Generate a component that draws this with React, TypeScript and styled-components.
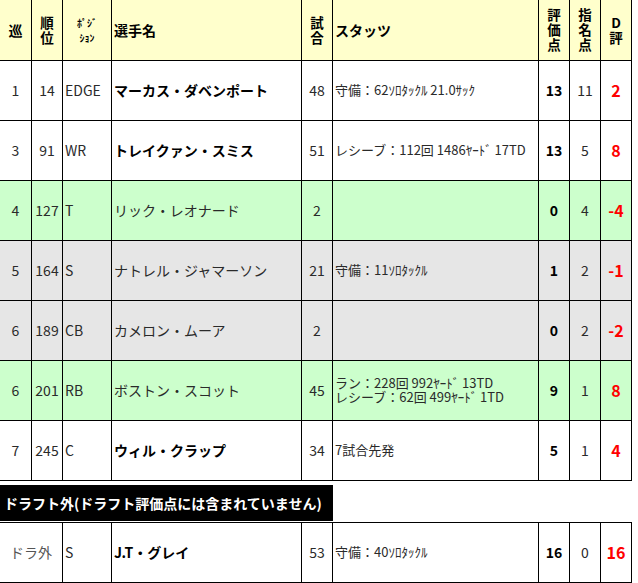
import React from 'react';
import styled, { createGlobalStyle } from 'styled-components';

const Global = createGlobalStyle`
  html, body { margin: 0; padding: 0; background: #fff; }
  body { font-family: "Noto Sans CJK JP", "Liberation Sans", sans-serif; overflow: hidden; }
`;

const Page = styled.div`
  display: flex;
  flex-direction: column;
  width: 638px;
  margin: -1px 0 0 -1px;
`;

const Table = styled.table`
  border-collapse: collapse;
  table-layout: fixed;
  width: 633px;
  font-family: "Noto Sans CJK JP", "Liberation Sans", sans-serif;
  color: #2a2a2a;
  font-size: 14px;
`;

type Bg = 'white' | 'green' | 'gray' | 'yellow';
const bgMap: Record<Bg, string> = {
  white: '#ffffff',
  green: '#ccffcc',
  gray: '#e6e6e6',
  yellow: '#ffffcc',
};

const Row = styled.tr<{ $bg: Bg; $h: number }>`
  background: ${(p) => bgMap[p.$bg]};
  height: ${(p) => p.$h}px;
`;

const Cell = styled.td<{ $align?: 'left' | 'center'; $bold?: boolean; $red?: boolean; $muted?: boolean; $size?: number }>`
  border: 1px solid #000;
  padding: 0 0 2px ${(p) => (p.$align === 'left' ? 2 : 0)}px;
  text-align: ${(p) => p.$align || 'center'};
  vertical-align: middle;
  font-weight: ${(p) => (p.$bold || p.$red ? 700 : 400)};
  color: ${(p) => (p.$red ? '#ff0000' : p.$bold ? '#000' : p.$muted ? '#555' : '#2a2a2a')};
  font-size: ${(p) => p.$size || 14}px;
  line-height: 16px;
  white-space: nowrap;
  overflow: hidden;
`;

const HeadCell = styled.th<{ $align?: 'left' | 'center' }>`
  border: 1px solid #000;
  padding: 0 0 1px ${(p) => (p.$align === 'left' ? 2 : 0)}px;
  text-align: ${(p) => p.$align || 'center'};
  vertical-align: middle;
  font-weight: 700;
  color: #000;
  font-size: 14px;
  white-space: nowrap;
`;

const HeadLine = styled.span`
  display: block;
  font-size: 13.5px;
  line-height: 15px;
  height: 15px;
`;

const SmallHead = styled.span`
  display: block;
  font-size: 10px;
  line-height: 15px;
  height: 15px;
`;

const Stats = styled.span`
  display: block;
  font-size: 13px;
  line-height: 14px;
`;

const Banner = styled.div`
  margin-top: 4px;
  margin-left: 1px;
  width: 333px;
  height: 36px;
  background: #000;
  color: #fff;
  font-weight: 700;
  font-size: 14px;
  display: flex;
  align-items: center;
  padding: 0 0 1px 4px;
  box-sizing: border-box;
  white-space: nowrap;
  margin-bottom: 1px;
`;

const widths = [32, 31, 49, 190, 31, 206, 31, 31, 31];

const Cols = () => (
  <colgroup>
    {widths.map((w, i) => (
      <col key={i} style={{ width: w }} />
    ))}
  </colgroup>
);

type Player = {
  r: string;
  o: string;
  p: string;
  n: string;
  bold?: boolean;
  g: string;
  s: string[];
  e: string;
  c: string;
  d: string;
  bg: Bg;
};

const players: Player[] = [
  { r: '1', o: '14', p: 'EDGE', n: 'マーカス・ダベンポート', bold: true, g: '48', s: ['守備：62ｿﾛﾀｯｸﾙ 21.0ｻｯｸ'], e: '13', c: '11', d: '2', bg: 'white' },
  { r: '3', o: '91', p: 'WR', n: 'トレイクァン・スミス', bold: true, g: '51', s: ['レシーブ：112回 1486ﾔｰﾄﾞ 17TD'], e: '13', c: '5', d: '8', bg: 'white' },
  { r: '4', o: '127', p: 'T', n: 'リック・レオナード', g: '2', s: [], e: '0', c: '4', d: '-4', bg: 'green' },
  { r: '5', o: '164', p: 'S', n: 'ナトレル・ジャマーソン', g: '21', s: ['守備：11ｿﾛﾀｯｸﾙ'], e: '1', c: '2', d: '-1', bg: 'gray' },
  { r: '6', o: '189', p: 'CB', n: 'カメロン・ムーア', g: '2', s: [], e: '0', c: '2', d: '-2', bg: 'gray' },
  { r: '6', o: '201', p: 'RB', n: 'ボストン・スコット', g: '45', s: ['ラン：228回 992ﾔｰﾄﾞ 13TD', 'レシーブ：62回 499ﾔｰﾄﾞ 1TD'], e: '9', c: '1', d: '8', bg: 'green' },
  { r: '7', o: '245', p: 'C', n: 'ウィル・クラップ', bold: true, g: '34', s: ['7試合先発'], e: '5', c: '1', d: '4', bg: 'white' },
];

const extra: Player = { r: '', o: '', p: 'S', n: 'J.T・グレイ', bold: true, g: '53', s: ['守備：40ｿﾛﾀｯｸﾙ'], e: '16', c: '0', d: '16', bg: 'white' };

const PlayerCells = ({ pl }: { pl: Player }) => (
  <>
    <Cell $align="left">{pl.p}</Cell>
    <Cell $align="left" $bold={pl.bold}>{pl.n}</Cell>
    <Cell>{pl.g}</Cell>
    <Cell $align="left">
      {pl.s.map((t, i) => (
        <Stats key={i}>{t}</Stats>
      ))}
    </Cell>
    <Cell $bold>{pl.e}</Cell>
    <Cell>{pl.c}</Cell>
    <Cell $red $size={16}>{pl.d}</Cell>
  </>
);

const Stack = ({ lines }: { lines: string[] }) => (
  <>
    {lines.map((l, i) => (
      <HeadLine key={i}>{l}</HeadLine>
    ))}
  </>
);

export default function App() {
  return (
    <>
      <Global />
      <Page>
        <Table>
          <Cols />
          <thead>
            <Row $bg="yellow" $h={61}>
              <HeadCell>巡</HeadCell>
              <HeadCell><Stack lines={['順', '位']} /></HeadCell>
              <HeadCell>
                <SmallHead>ﾎﾟｼﾞ</SmallHead>
                <SmallHead>ｼｮﾝ</SmallHead>
              </HeadCell>
              <HeadCell $align="left">選手名</HeadCell>
              <HeadCell><Stack lines={['試', '合']} /></HeadCell>
              <HeadCell $align="left">スタッツ</HeadCell>
              <HeadCell><Stack lines={['評', '価', '点']} /></HeadCell>
              <HeadCell><Stack lines={['指', '名', '点']} /></HeadCell>
              <HeadCell><Stack lines={['D', '評']} /></HeadCell>
            </Row>
          </thead>
          <tbody>
            {players.map((pl, i) => (
              <Row key={i} $bg={pl.bg} $h={60}>
                <Cell>{pl.r}</Cell>
                <Cell>{pl.o}</Cell>
                <PlayerCells pl={pl} />
              </Row>
            ))}
          </tbody>
        </Table>
        <Banner>ドラフト外(ドラフト評価点には含まれていません)</Banner>
        <Table>
          <Cols />
          <tbody>
            <Row $bg="white" $h={60}>
              <Cell colSpan={2} $muted>ドラ外</Cell>
              <PlayerCells pl={extra} />
            </Row>
          </tbody>
        </Table>
      </Page>
    </>
  );
}
